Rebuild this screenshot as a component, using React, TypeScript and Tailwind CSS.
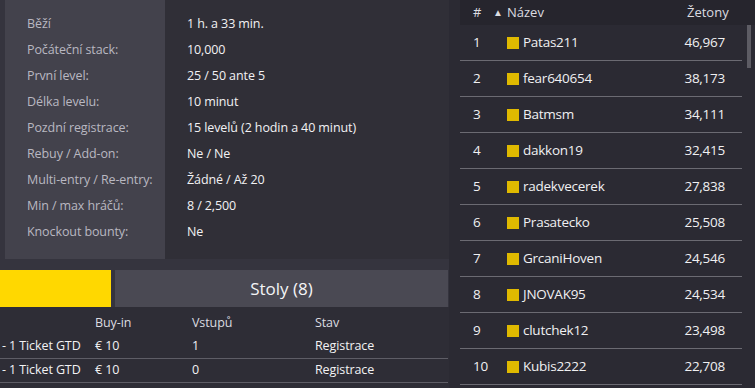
import React from "react";

const info: [string, string][] = [
  ["Běží", "1 h. a 33 min."],
  ["Počáteční stack:", "10,000"],
  ["První level:", "25 / 50 ante 5"],
  ["Délka levelu:", "10 minut"],
  ["Pozdní registrace:", "15 levelů (2 hodin a 40 minut)"],
  ["Rebuy / Add-on:", "Ne / Ne"],
  ["Multi-entry / Re-entry:", "Žádné / Až 20"],
  ["Min / max hráčů:", "8 / 2,500"],
  ["Knockout bounty:", "Ne"],
];

const players: [number, string, string][] = [
  [1, "Patas211", "46,967"],
  [2, "fear640654", "38,173"],
  [3, "Batmsm", "34,111"],
  [4, "dakkon19", "32,415"],
  [5, "radekvecerek", "27,838"],
  [6, "Prasatecko", "25,508"],
  [7, "GrcaniHoven", "24,546"],
  [8, "JNOVAK95", "24,534"],
  [9, "clutchek12", "23,498"],
  [10, "Kubis2222", "22,708"],
];

const entries: [string, string, string, string][] = [
  ["- 1 Ticket GTD", "€ 10", "1", "Registrace"],
  ["- 1 Ticket GTD", "€ 10", "0", "Registrace"],
];

export default function App() {
  return (
    <div
      className="w-[755px] h-[388px] flex bg-[#2b2a33] overflow-hidden"
      style={{ fontFamily: '"Open Sans", "Noto Sans", sans-serif' }}
    >
      <div className="w-[449px] flex flex-col bg-[#35343e]">
        <div className="flex h-[259px] pl-[5px]">
          <div className="w-[160px] bg-[#43424c] pl-[22px] pt-[11px]">
            {info.map(([l]) => (
              <div key={l} className="h-[26px] flex items-center text-[12.5px] tracking-[-0.1px] text-[#b9b8c1] whitespace-nowrap">
                {l}
              </div>
            ))}
          </div>
          <div className="flex-1 bg-[#302f37] pl-[22px] pt-[11px]">
            {info.map(([l, v]) => (
              <div key={l} className="h-[26px] flex items-center text-[12.5px] tracking-[-0.1px] text-[#f2f2f4] whitespace-nowrap">
                {v}
              </div>
            ))}
          </div>
        </div>
        <div className="h-[11px]" />
        <div className="flex h-[37px] gap-[4px] pr-[1px]">
          <div className="w-[111px] bg-[#ffd800]" />
          <div className="flex-1 bg-[#4a4953] flex items-center justify-center text-[17px] text-[#f4f4f6]">
            Stoly (8)
          </div>
        </div>
        <div className="flex-1 bg-[#2e2d36] pr-[1px] text-[12.5px] tracking-[-0.1px]">
          <div className="flex h-[28px] items-center pt-[4px] text-[#dcdce0]">
            <div className="w-[95px]" />
            <div className="w-[97px]">Buy-in</div>
            <div className="w-[123px]">Vstupů</div>
            <div>Stav</div>
          </div>
          {entries.map((e, i) => (
            <div key={i} className="flex h-[24px] items-center border-b border-[#5e5d66] text-[#f2f2f4] whitespace-nowrap">
              <div className="w-[95px] pl-[2px]">{e[0]}</div>
              <div className="w-[97px]">{e[1]}</div>
              <div className="w-[123px]">{e[2]}</div>
              <div>{e[3]}</div>
            </div>
          ))}
        </div>
      </div>
      <div className="w-[11px]" />
      <div className="flex-1 relative flex flex-col">
        <div className="h-[25px] bg-[#26252d] flex items-center text-[13px] text-[#dcdce0]">
          <div className="w-[33px] pl-[13px]">#</div>
          <div className="w-[14px] text-[10px]">▲</div>
          <div className="w-[180px]">Název</div>
          <div>Žetony</div>
        </div>
        <div className="w-[282px]">
          {players.map(([n, name, chips]) => (
            <div key={n} className="h-[36px] flex items-center border-b border-[#6b6a72] text-[13.5px] tracking-[-0.25px] text-[#f0f0f2]">
              <div className="w-[47px] pl-[13px]">{n}</div>
              <div className="w-[12px] h-[12px] bg-[#dfb900] mr-[4px]" />
              <div className="flex-1">{name}</div>
              <div className="pr-[17px]">{chips}</div>
            </div>
          ))}
        </div>
        <div className="absolute left-[287px] top-[25px] w-[4px] h-[43px] bg-[#5d5c64]" />
      </div>
    </div>
  );
}
